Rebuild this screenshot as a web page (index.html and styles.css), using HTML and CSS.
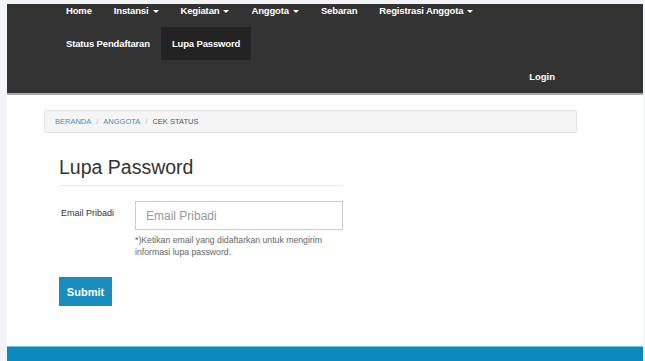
FILE: index.html
```html
<!DOCTYPE html>
<html lang="en">
<head>
    <meta charset="UTF-8">
    <meta name="viewport" content="width=device-width, initial-scale=1.0">
    <title>Lupa Password</title>
    <link rel="stylesheet" href="styles.css">
</head>
<body>
    <div class="page">
        <nav class="navbar">
            <ul class="nav-menu">
                <li><a href="#">Home</a></li>
                <li><a href="#">Instansi <span class="caret"></span></a></li>
                <li><a href="#">Kegiatan <span class="caret"></span></a></li>
                <li><a href="#">Anggota <span class="caret"></span></a></li>
                <li><a href="#">Sebaran</a></li>
                <li><a href="#">Registrasi Anggota <span class="caret"></span></a></li>
                <li><a href="#">Status Pendaftaran</a></li>
                <li class="active"><a href="#">Lupa Password</a></li>
            </ul>
            <div class="nav-right">
                <a href="#">Login</a>
            </div>
        </nav>

        <div class="main">
            <div class="container">
                <ol class="breadcrumb">
                    <li><a href="#">Beranda</a></li>
                    <li><a href="#">Anggota</a></li>
                    <li class="current">Cek Status</li>
                </ol>

                <div class="content">
                    <h2 class="page-title">Lupa Password</h2>

                    <form class="form">
                        <div class="form-row">
                            <label for="email">Email Pribadi</label>
                            <div class="field">
                                <input type="text" id="email" placeholder="Email Pribadi">
                                <p class="help">*)Ketikan email yang didaftarkan untuk mengirim informasi lupa password.</p>
                            </div>
                        </div>
                        <button type="button" class="btn-submit">Submit</button>
                    </form>
                </div>
            </div>
        </div>

        <footer class="footer"></footer>
    </div>
</body>
</html>
```

FILE: styles.css
```css
body {
    margin: 0;
    padding: 4px 2px 0 7px;
    background-color: #f3f4f7;
    font-family: 'Liberation Sans', Arial, sans-serif;
    color: #333;
    overflow: hidden;
}
.page {
    background-color: white;
    height: 357px;
    display: flex;
    flex-direction: column;
}
a {
    text-decoration: none;
}
.navbar {
    background-color: #333333;
    height: 89px;
    border-bottom: 2px solid #a9a9a9;
    overflow: hidden;
    display: flex;
    flex-direction: column;
}
.nav-menu {
    list-style: none;
    margin: -10px 0 0 0;
    padding: 0 0 0 48px;
    width: 440px;
    display: flex;
    flex-wrap: wrap;
}
.nav-menu li a {
    display: flex;
    align-items: center;
    height: 33px;
    padding: 0 11px;
    color: white;
    font-size: 9.5px;
    font-weight: bold;
    letter-spacing: -0.15px;
}
.nav-menu li.active a {
    background-color: #232323;
}
.caret {
    display: inline-block;
    width: 0;
    height: 0;
    margin-left: 4px;
    margin-top: 2px;
    border-top: 3px solid white;
    border-left: 3px solid transparent;
    border-right: 3px solid transparent;
}
.nav-right {
    display: flex;
    justify-content: flex-end;
    padding-right: 88px;
}
.nav-right a {
    display: flex;
    align-items: center;
    height: 33px;
    color: white;
    font-size: 9.5px;
    font-weight: bold;
}
.main {
    flex: 1;
}
.container {
    width: 533px;
    margin-left: 37px;
    padding-top: 15px;
}
.breadcrumb {
    list-style: none;
    margin: 0;
    padding: 0 10px;
    height: 21px;
    display: flex;
    align-items: center;
    background-color: #f5f5f5;
    border: 1px solid #e3e3e3;
    border-radius: 2px;
    font-size: 7.5px;
    text-transform: uppercase;
}
.breadcrumb li + li::before {
    content: "/";
    color: #bbb;
    padding: 0 5px;
}
.breadcrumb a {
    color: #4a8cc0;
}
.breadcrumb .current {
    color: #555;
}
.content {
    padding: 0 15px;
}
.page-title {
    margin: 23px 0 0 0;
    padding-bottom: 6px;
    width: 284px;
    border-bottom: 1px solid #e8e8e8;
    font-size: 19.5px;
    font-weight: normal;
    color: #333;
}
.form {
    margin-top: 15px;
}
.form-row {
    display: flex;
}
.form-row label {
    width: 74px;
    padding-left: 2px;
    padding-top: 7px;
    font-size: 9px;
    color: #333;
}
.field input {
    box-sizing: border-box;
    width: 208px;
    height: 29px;
    border: 1px solid #ccc;
    padding: 0 10px;
    font-family: 'Liberation Sans', Arial, sans-serif;
    font-size: 12px;
    color: #555;
}
.field input::placeholder {
    color: #999;
}
.help {
    margin: 4px 0 0 0;
    width: 205px;
    font-size: 8.7px;
    line-height: 12px;
    color: #666;
}
.btn-submit {
    margin-top: 19px;
    width: 53px;
    height: 29px;
    border: none;
    background-color: #1a8dbf;
    color: white;
    font-family: 'Liberation Sans', Arial, sans-serif;
    font-size: 11px;
    font-weight: bold;
    padding: 0;
}
.footer {
    height: 14px;
    background-color: #0b8bbd;
    border-top: 1px solid #6ec3df;
}
```
